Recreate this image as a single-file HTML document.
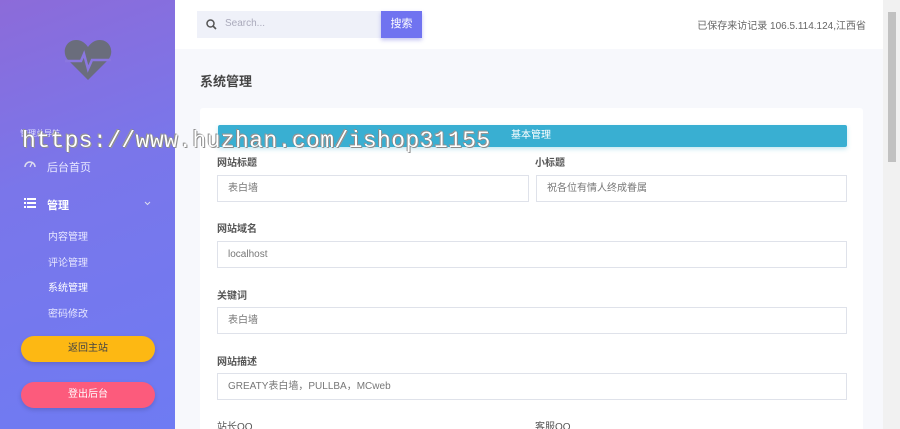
<!DOCTYPE html>
<html style="width:900px;height:429px;overflow:hidden"><head><meta charset="utf-8">
<style>
*{margin:0;padding:0;box-sizing:border-box}
body{width:900px;height:429px;overflow:hidden;position:relative;font-family:"Liberation Sans","Noto Sans CJK SC",sans-serif;background:#f7f8fc}
.side{position:absolute;left:0;top:0;width:175px;height:429px;background:linear-gradient(160deg,#8c6bd9 0%,#7a76ea 40%,#6e7bf3 100%);color:#fff}
.main{position:absolute;left:175px;top:0;width:708px;height:429px;overflow:hidden}
.hdr{position:absolute;left:0;top:0;width:708px;height:49px;background:#fff}
.search{position:absolute;left:22px;top:11px;width:184px;height:27px;background:#eff1f9}
.search span{position:absolute;left:28px;top:7px;font-size:10px;color:#aab}
.btn{position:absolute;left:206px;top:11px;width:41px;height:27px;background:#7073f0;color:#fff;font-size:11px;text-align:center;line-height:27px;box-shadow:0 2px 4px rgba(100,100,220,.4)}
.ip{position:absolute;right:17px;top:17px;font-size:10px;color:#666}
.title{position:absolute;left:25px;top:71px;font-size:13px;color:#444;font-weight:bold}
.card{position:absolute;left:25px;top:108px;width:663px;height:340px;background:#fff;border-radius:3px}
.bar{position:absolute;left:18px;top:17px;width:629px;height:22px;background:#39afd2;border-radius:2px;color:#fff;font-size:10px;line-height:22px;padding-left:293px;box-shadow:0 2px 5px rgba(57,175,210,.3)}
.lbl{position:absolute;font-size:10px;color:#555;font-weight:bold}
.inp{position:absolute;height:27px;border:1px solid #dfe2ea;font-size:10px;color:#777;line-height:25px;padding-left:10px}
.nav{position:absolute;font-size:11px;color:#fff}
.sub{position:absolute;left:48px;font-size:10px;color:#e6e6ff}
.pill{position:absolute;left:21px;width:134px;height:26px;border-radius:13px;font-size:10px;text-align:center;line-height:26px}
.wm{position:absolute;left:22px;top:128px;font-family:"Liberation Mono",monospace;font-size:23px;letter-spacing:0.4px;color:#fff;text-shadow:0 0 1px #444,1px 1px 0 #999,-1px -1px 0 #999;white-space:nowrap}
.sb{position:absolute;left:883px;top:0;width:17px;height:429px;background:#f1f1f1}
.sb div{position:absolute;left:5px;top:12px;width:8px;height:150px;background:#c1c1c1}
</style></head><body>
<div class="side">
<svg style="position:absolute;left:64px;top:40px" width="48" height="40" viewBox="0 0 48 40"><path d="M24 40 L4 20 C-3 12 2 0 12 0 C18 0 22 4 24 7 C26 4 30 0 36 0 C46 0 51 12 44 20 Z" fill="#6a6d7c"/><path d="M1 21 H17 L20 14 L24 29 L28 20 H47" stroke="#8a77e0" stroke-width="2.5" fill="none"/></svg>
<div style="position:absolute;left:20px;top:128px;font-size:8px;color:#e0e0ff">管理总导航</div>
<svg style="position:absolute;left:24px;top:160px" width="12" height="8"><path d="M1 7 A5 5 0 0 1 11 7" stroke="#dde" fill="none" stroke-width="1.5"/><path d="M6 7 L8 3" stroke="#dde" stroke-width="1.3"/></svg>
<div class="nav" style="left:47px;top:159px;color:#e8e8ff">后台首页</div>
<svg style="position:absolute;left:24px;top:198px" width="12" height="10"><g fill="#fff"><rect x="0" y="0" width="2" height="2"/><rect x="3" y="0" width="9" height="2"/><rect x="0" y="4" width="2" height="2"/><rect x="3" y="4" width="9" height="2"/><rect x="0" y="8" width="2" height="2"/><rect x="3" y="8" width="9" height="2"/></g></svg>
<div class="nav" style="left:47px;top:197px;font-weight:bold">管理</div>
<svg style="position:absolute;left:144px;top:201px" width="7" height="5"><path d="M1 1 L3.5 3.5 L6 1" stroke="#dde" fill="none"/></svg>
<div class="sub" style="top:228px">内容管理</div>
<div class="sub" style="top:254px">评论管理</div>
<div class="sub" style="top:279px;color:#fff">系统管理</div>
<div class="sub" style="top:305px">密码修改</div>
<div class="pill" style="top:336px;background:#fdb813;color:#444;box-shadow:0 2px 5px rgba(0,0,0,.15)">返回主站</div>
<div class="pill" style="top:382px;background:#fc5b7c;color:#fff;box-shadow:0 2px 5px rgba(0,0,0,.15)">登出后台</div>
</div>
<div class="main">
<div class="hdr">
<div class="search"><svg style="position:absolute;left:9px;top:8px" width="11" height="11"><circle cx="4.5" cy="4.5" r="3.5" stroke="#555" stroke-width="1.5" fill="none"/><path d="M7 7 L10 10" stroke="#555" stroke-width="1.6"/></svg><span>Search...</span></div>
<div class="btn">搜索</div>
<div class="ip">已保存来访记录 106.5.114.124,江西省</div>
</div>
<div class="title">系统管理</div>
<div class="card">
<div class="bar">基本管理</div>
<div class="lbl" style="left:17px;top:46px">网站标题</div>
<div class="inp" style="left:17px;top:67px;width:312px">表白墙</div>
<div class="lbl" style="left:335px;top:46px">小标题</div>
<div class="inp" style="left:336px;top:67px;width:311px">祝各位有情人终成眷属</div>
<div class="lbl" style="left:17px;top:112px">网站域名</div>
<div class="inp" style="left:17px;top:133px;width:630px">localhost</div>
<div class="lbl" style="left:17px;top:179px">关键词</div>
<div class="inp" style="left:17px;top:199px;width:630px">表白墙</div>
<div class="lbl" style="left:17px;top:245px">网站描述</div>
<div class="inp" style="left:17px;top:265px;width:630px">GREATY表白墙，PULLBA，MCweb</div>
<div class="lbl" style="left:17px;top:310px;font-weight:normal">站长QQ</div>
<div class="lbl" style="left:335px;top:310px;font-weight:normal">客服QQ</div>
</div>
</div>
<div class="wm">https://www.huzhan.com/ishop31155</div>
<div class="sb"><div></div></div>
</body></html>
